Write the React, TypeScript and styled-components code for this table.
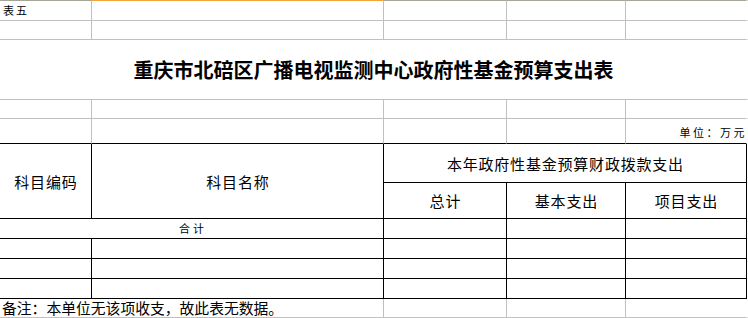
import styled, { createGlobalStyle } from 'styled-components'

const colors = {
  grid: '#c0c0c0',
  ink: '#000000',
  none: 'transparent',
  sheetTop: '#a8a496',
  selected: '#f2a33a',
}

type Line = 'grid' | 'ink' | 'none'

const GlobalStyle = createGlobalStyle`
  html, body {
    margin: 0;
    padding: 0;
    background: #ffffff;
  }
  body {
    font-family: "Noto Sans CJK SC", "Noto Sans", sans-serif;
    color: #000000;
  }
`

const fundColumns = ['总计', '基本支出', '项目支出']

export default function App() {
  return (
    <>
      <GlobalStyle />
      <Sheet>
        {/* 第一行：表号 */}
        <Cell $right="grid" $bottom="grid" $top="sheetTop" $align="start">
          <SmallText>表五</SmallText>
        </Cell>
        <Cell $right="grid" $bottom="grid" $top="selected" />
        <Cell $right="grid" $bottom="grid" $top="sheetTop" />
        <Cell $right="grid" $bottom="grid" $top="sheetTop" />
        <Cell $right="none" $bottom="grid" $top="sheetTop" />
        <Cell $right="none" $bottom="grid" $top="sheetTop" />

        <Cell $right="grid" $bottom="grid" />
        <Cell $right="grid" $bottom="grid" />
        <Cell $right="grid" $bottom="grid" />
        <Cell $right="grid" $bottom="grid" />
        <Cell $right="none" $bottom="grid" />
        <Cell $right="none" $bottom="grid" />

        <Cell $span={6} $right="none" $bottom="grid">
          <Title>重庆市北碚区广播电视监测中心政府性基金预算支出表</Title>
        </Cell>

        <Cell $right="grid" $bottom="grid" />
        <Cell $right="grid" $bottom="grid" />
        <Cell $right="grid" $bottom="grid" />
        <Cell $right="grid" $bottom="grid" />
        <Cell $right="none" $bottom="grid" />
        <Cell $right="none" $bottom="grid" />

        <Cell $right="grid" $bottom="ink" />
        <Cell $right="grid" $bottom="ink" />
        <Cell $right="grid" $bottom="ink" />
        <Cell $right="grid" $bottom="ink" />
        <Cell $right="none" $bottom="ink" $align="end">
          <UnitText>单位：万元</UnitText>
        </Cell>
        <Cell $right="none" $bottom="none" />

        {/* 表头 */}
        <Cell $rows={2} $right="ink" $bottom="ink">
          <HeadText>科目编码</HeadText>
        </Cell>
        <Cell $rows={2} $right="ink" $bottom="ink">
          <HeadText>科目名称</HeadText>
        </Cell>
        <Cell $span={3} $right="ink" $bottom="ink">
          <HeadText>本年政府性基金预算财政拨款支出</HeadText>
        </Cell>
        <Cell $right="none" $bottom="none" />
        {fundColumns.map((name) => (
          <Cell key={name} $right="ink" $bottom="ink">
            <HeadText>{name}</HeadText>
          </Cell>
        ))}
        <Cell $right="none" $bottom="none" />

        <Cell $span={2} $right="ink" $bottom="ink">
          <TotalText>合计</TotalText>
        </Cell>
        <Cell $right="ink" $bottom="ink" />
        <Cell $right="ink" $bottom="ink" />
        <Cell $right="ink" $bottom="ink" />
        <Cell $right="none" $bottom="none" />

        {[0, 1, 2].map((row) => (
          <Row key={row} />
        ))}

        <Cell $span={2} $right="grid" $bottom="grid" $align="start">
          <NoteText>备注：本单位无该项收支，故此表无数据。</NoteText>
        </Cell>
        <Cell $right="grid" $bottom="grid" />
        <Cell $right="grid" $bottom="grid" />
        <Cell $right="none" $bottom="grid" />
        <Cell $right="none" $bottom="grid" />
      </Sheet>
    </>
  )
}

function Row() {
  return (
    <>
      <Cell $right="ink" $bottom="ink" />
      <Cell $right="ink" $bottom="ink" />
      <Cell $right="ink" $bottom="ink" />
      <Cell $right="ink" $bottom="ink" />
      <Cell $right="ink" $bottom="ink" />
      <Cell $right="none" $bottom="none" />
    </>
  )
}

const Sheet = styled.div`
  display: grid;
  width: 748px;
  height: 318px;
  overflow: hidden;
  grid-template-columns: 92px 292px 123px 119px 121px 1fr;
  grid-template-rows: 21px 19px 60px 19px 25px 39px 36px 20px 20px 20px 20px 19px;
  background: #ffffff;
`

const Cell = styled.div<{
  $right: Line
  $bottom: Line
  $top?: 'sheetTop' | 'selected'
  $span?: number
  $rows?: number
  $align?: 'start' | 'center' | 'end'
}>`
  box-sizing: border-box;
  min-width: 0;
  display: flex;
  align-items: center;
  justify-content: ${({ $align = 'center' }) =>
    $align === 'start' ? 'flex-start' : $align === 'end' ? 'flex-end' : 'center'};
  grid-column: span ${({ $span = 1 }) => $span};
  grid-row: span ${({ $rows = 1 }) => $rows};
  border-right: 1px solid ${({ $right }) => colors[$right]};
  border-bottom: 1px solid ${({ $bottom }) => colors[$bottom]};
  border-top: ${({ $top }) => ($top ? `1px solid ${colors[$top]}` : 'none')};
  white-space: nowrap;
  overflow: visible;
`

const SmallText = styled.span`
  font-size: 11px;
  line-height: 1;
  padding-left: 3px;
  letter-spacing: 2px;
`

const UnitText = styled.span`
  font-size: 11px;
  line-height: 1;
  letter-spacing: 2.5px;
  margin-right: -1px;
  padding-top: 2px;
`

const TotalText = styled.span`
  font-size: 11px;
  line-height: 1;
  letter-spacing: 3px;
  padding-left: 3px;
`

const Title = styled.span`
  font-size: 20px;
  font-weight: 700;
  line-height: 1;
  letter-spacing: 0;
`

const HeadText = styled.span`
  font-size: 15px;
  line-height: 1;
  letter-spacing: 0.8px;
  padding-left: 0.8px;
`

const NoteText = styled.span`
  font-size: 14.8px;
  line-height: 1;
  padding-left: 2px;
  padding-top: 1px;
`
